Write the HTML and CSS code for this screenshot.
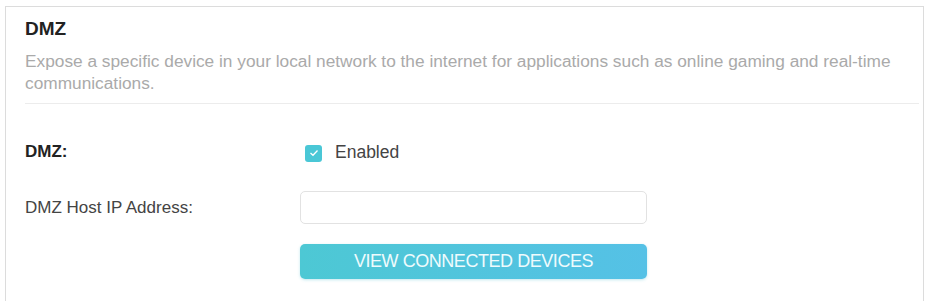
FILE: index.html
```html
<!DOCTYPE html>
<html>
<head>
<meta charset="utf-8">
<link rel="stylesheet" href="styles.css">
</head>
<body>
<div class="card">
  <h2 class="title">DMZ</h2>
  <p class="desc">Expose a specific device in your local network to the internet for applications such as online gaming and <span class="nowrap">real-time</span> communications.</p>
  <div class="divider"></div>
  <div class="row row-dmz">
    <div class="label bold">DMZ:</div>
    <label class="check">
      <span class="box"><svg width="10" height="8" viewBox="0 0 10 8"><path d="M1.5 4 L4 6.3 L8.5 1.5" fill="none" stroke="#ffffff" stroke-width="1.3"/></svg></span>
      <span class="check-text">Enabled</span>
    </label>
  </div>
  <div class="row row-ip">
    <div class="label">DMZ Host IP Address:</div>
    <div class="input"></div>
  </div>
  <div class="row row-btn">
    <div class="label"></div>
    <button class="btn">VIEW CONNECTED DEVICES</button>
  </div>
</div>
</body>
</html>
```
FILE: styles.css
```css
html, body {
  margin: 0;
  padding: 0;
  background: #ffffff;
  font-family: "Liberation Sans", Arial, sans-serif;
}
body {
  padding: 6px 2px 0 5px;
  height: 301px;
  box-sizing: border-box;
  overflow: hidden;
}
.card {
  border: 1.5px solid #dcdcdc;
  border-bottom: none;
  height: 295px;
  padding: 0 4px 0 19px;
  box-sizing: border-box;
}
.title {
  margin: 0;
  padding-top: 11px;
  font-size: 19px;
  line-height: 22px;
  font-weight: bold;
  color: #222;
}
.desc {
  margin: 10px 0 0 0;
  font-size: 17.3px;
  line-height: 22px;
  color: #aaaaaa;
  padding-right: 10px;
}
.nowrap {
  white-space: nowrap;
}
.divider {
  height: 1px;
  background: #ececec;
  margin-top: 9px;
}
.row {
  display: flex;
  align-items: center;
}
.label {
  width: 275px;
  font-size: 17px;
  color: #444;
}
.bold {
  font-weight: bold;
  color: #222;
}
.row-dmz {
  margin-top: 37px;
  height: 22px;
}
.check {
  display: flex;
  align-items: center;
  margin-left: 5px;
}
.box {
  width: 17px;
  height: 17px;
  border-radius: 3px;
  background: #4ac7d6;
  display: flex;
  align-items: center;
  justify-content: center;
  margin-top: 2px;
}
.check-text {
  margin-left: 13px;
  font-size: 17.5px;
  color: #444;
}
.row-ip {
  margin-top: 28px;
}
.input {
  height: 33px;
  border: 1px solid #e2e2e2;
  border-radius: 5px;
  box-sizing: border-box;
  width: 347px;
}
.row-btn {
  margin-top: 20px;
}
.btn {
  width: 347px;
  height: 35px;
  border: none;
  border-radius: 5px;
  background: linear-gradient(90deg, #4dc8d4 0%, #55c1e6 100%);
  color: #eefbfd;
  font-family: "Liberation Sans", Arial, sans-serif;
  font-size: 18px;
  letter-spacing: -0.45px;
  box-shadow: 0 1px 3px rgba(80, 190, 210, 0.35);
  padding: 0;
}
```
